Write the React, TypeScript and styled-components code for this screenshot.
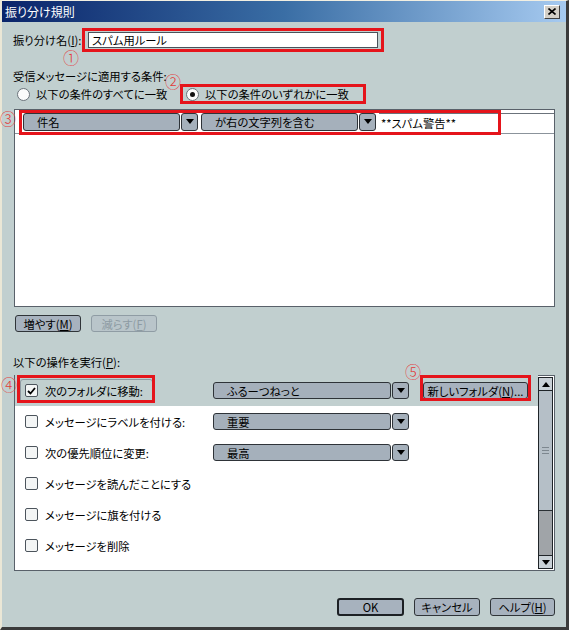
import React from 'react'
import styled, { createGlobalStyle } from 'styled-components'

const GlobalStyle = createGlobalStyle`
  html, body {
    margin: 0;
    padding: 0;
    background: #c1cfcf;
  }
  * {
    box-sizing: border-box;
  }
`

const Window = styled.div`
  width: 569px;
  height: 630px;
  display: flex;
  flex-direction: column;
  background: #c1cfcf;
  border-top: 1px solid #f2efe2;
  border-left: 2px solid #ebe7d6;
  border-right: 3px solid #3a3a3a;
  border-bottom: 3px solid #3a3a3a;
  font-family: "Noto Sans CJK JP", "Noto Sans", sans-serif;
  font-size: 11.3px;
  font-feature-settings: "palt";
  color: #000;
`

const TitleBar = styled.div`
  height: 21px;
  display: flex;
  align-items: center;
  justify-content: space-between;
  padding: 0 6px 0 3px;
  background: linear-gradient(to right, #0a246a 0%, #3a6ea5 50%, #a6caf0 100%);
  color: #fff;
  font-size: 12px;
  line-height: 21px;
`

const CloseButton = styled.div`
  width: 16px;
  height: 14px;
  display: flex;
  align-items: center;
  justify-content: center;
  background: #d4d0c8;
  border: 1px solid;
  border-color: #ffffff #404040 #404040 #ffffff;
`

const Body = styled.div`
  flex: 1;
  display: flex;
  flex-direction: column;
  padding: 0 11px 11px 11px;
`

const Label = styled.div<{ $mt: number }>`
  margin-top: ${p => p.$mt}px;
  line-height: 14px;
  white-space: nowrap;
`

const NameRow = styled.div`
  margin-top: 10px;
  display: flex;
  align-items: center;
  height: 16px;
`

const NameLabel = styled.span`
  width: 75px;
  flex-shrink: 0;
  line-height: 16px;
`

const NameField = styled.div`
  position: relative;
  width: 290px;
  height: 16px;
`

const TextBox = styled.div`
  height: 100%;
  border: 1px solid #4a525a;
  background: #fff;
  padding-left: 3px;
  line-height: 14px;
`

const RedFrame = styled.span<{ $t: number; $l: number; $r: number; $b: number }>`
  position: absolute;
  top: ${p => p.$t}px;
  left: ${p => p.$l}px;
  right: ${p => p.$r}px;
  bottom: ${p => p.$b}px;
  border: 3px solid #e5141b;
  pointer-events: none;
`

const Marker = styled.span<{ $x: number; $y: number }>`
  position: absolute;
  left: ${p => p.$x}px;
  top: ${p => p.$y}px;
  font-size: 16px;
  line-height: 16px;
  font-weight: 300;
  font-feature-settings: normal;
  color: #e23a3a;
  pointer-events: none;
`

const RadioRow = styled.div`
  margin-top: 1px;
  height: 20px;
  display: flex;
  align-items: center;
`

const RadioOption = styled.div<{ $w: number; $ml?: number }>`
  position: relative;
  height: 100%;
  width: ${p => p.$w}px;
  margin-left: ${p => p.$ml ?? 0}px;
  display: flex;
  align-items: center;
  gap: 6px;
  white-space: nowrap;
`

const Radio = styled.span<{ $on?: boolean }>`
  width: 13px;
  height: 13px;
  flex-shrink: 0;
  border-radius: 50%;
  background: #fafbfb;
  border: 1px solid #6b737b;
  display: flex;
  align-items: center;
  justify-content: center;

  &::after {
    content: '';
    display: ${p => (p.$on ? 'block' : 'none')};
    width: 5px;
    height: 5px;
    border-radius: 50%;
    background: #111;
  }
`

const ListBox = styled.div<{ $h: number; $mt: number }>`
  margin-top: ${p => p.$mt}px;
  margin-left: 1px;
  height: ${p => p.$h}px;
  border: 1px solid #59616a;
  background: #fff;
  display: flex;
`

const CondRow = styled.div`
  position: relative;
  flex: 1;
  align-self: flex-start;
  height: 24px;
  display: flex;
  align-items: center;
  gap: 3px;
  padding-left: 8px;
  border-bottom: 1px solid #8b939b;
`

const ConditionText = styled.div`
  flex: 1;
  align-self: flex-end;
  height: 20px;
  border-top: 1px solid #6b737b;
  padding-left: 2px;
  line-height: 18px;
  white-space: nowrap;
`

const SelectBox = styled.div<{ $w: number; $h: number }>`
  display: flex;
  gap: 1px;
  width: ${p => p.$w}px;
  height: ${p => p.$h}px;
  flex-shrink: 0;
`

const SelectField = styled.div`
  flex: 1;
  display: flex;
  align-items: center;
  padding-left: 13px;
  background: #a5b0bb;
  border: 1px solid #2e3338;
  border-radius: 3px;
  white-space: nowrap;
  overflow: hidden;
`

const SelectArrow = styled.div`
  width: 17px;
  display: flex;
  align-items: center;
  justify-content: center;
  background: #a5b0bb;
  border: 1px solid #2e3338;
  border-radius: 3px;

  &::after {
    content: '';
    border-left: 4px solid transparent;
    border-right: 4px solid transparent;
    border-top: 5px solid #000;
  }
`

const ButtonRow = styled.div`
  margin-top: 8px;
  padding-left: 2px;
  display: flex;
  gap: 10px;
`

const Button = styled.div<{ $w: number; $h?: number; $disabled?: boolean; $default?: boolean }>`
  position: relative;
  width: ${p => p.$w}px;
  height: ${p => p.$h ?? 17}px;
  display: flex;
  align-items: center;
  justify-content: center;
  background: ${p => (p.$disabled ? '#b9c5ca' : '#a7b2be')};
  color: ${p => (p.$disabled ? '#8d9ba3' : '#000')};
  border: ${p => (p.$default ? '2px solid #1c2024' : p.$disabled ? '1px solid #8f9ca4' : '1px solid #2f3438')};
  border-radius: 3px;
  white-space: nowrap;
  line-height: 14px;
`

const Rows = styled.div`
  flex: 1;
  margin-top: -1px;
  display: flex;
  flex-direction: column;
`

const ActionRow = styled.div<{ $active?: boolean }>`
  height: 31px;
  flex-shrink: 0;
  display: grid;
  grid-template-columns: 198px 196px auto;
  align-items: center;
  background: ${p => (p.$active ? '#c1cfcf' : 'transparent')};
`

const LabelCell = styled.div`
  padding-left: 5px;
  display: flex;
`

const LabelBox = styled.div<{ $focus?: boolean }>`
  position: relative;
  height: 24px;
  display: inline-flex;
  align-items: center;
  gap: 7px;
  padding: 0 9px 0 4px;
  border: 1px solid ${p => (p.$focus ? '#8e99a1' : 'transparent')};
  border-radius: 3px;
  white-space: nowrap;
`

const CheckBox = styled.span`
  width: 13px;
  height: 13px;
  flex-shrink: 0;
  display: flex;
  align-items: center;
  justify-content: center;
  background: #f3f5f5;
  border: 1px solid #4c545c;
  border-radius: 2px;
`

const FolderCell = styled.div`
  padding-left: 14px;
  display: flex;
`

const ScrollBar = styled.div`
  width: 15px;
  margin: 1px 1px 1px 0;
  display: flex;
  flex-direction: column;
  border: 1px solid #1f2428;
  background: #a0a4a8;
`

const ScrollButton = styled.div<{ $up?: boolean }>`
  height: 13px;
  display: flex;
  align-items: center;
  justify-content: center;
  background: #c9d1d7;
  border-bottom: ${p => (p.$up ? '1px solid #1f2428' : 'none')};
  border-top: ${p => (p.$up ? 'none' : '1px solid #1f2428')};

  &::after {
    content: '';
    border-left: 4px solid transparent;
    border-right: 4px solid transparent;
    ${p => (p.$up ? 'border-bottom: 5px solid #000;' : 'border-top: 5px solid #000;')}
  }
`

const Thumb = styled.div`
  height: 120px;
  display: flex;
  flex-direction: column;
  align-items: center;
  justify-content: center;
  gap: 2px;
  background: #b5bfc7;
  border-bottom: 1px solid #2a3034;

  span {
    width: 7px;
    height: 1px;
    background: #7d878f;
  }
`

const Track = styled.div`
  flex: 1;
`

const Footer = styled.div`
  margin-top: auto;
  display: flex;
  justify-content: flex-end;
  gap: 10px;
`

const Check = () => (
  <svg width="9" height="8" viewBox="0 0 9 8">
    <path d="M1 4 L3.5 6.5 L8 1" fill="none" stroke="#000" strokeWidth="1.8" />
  </svg>
)

const Select = ({ text, w, h }: { text: string; w: number; h: number }) => (
  <SelectBox $w={w} $h={h}>
    <SelectField>{text}</SelectField>
    <SelectArrow />
  </SelectBox>
)

const actions = [
  { label: 'メッセージにラベルを付ける:', select: '重要' },
  { label: '次の優先順位に変更:', select: '最高' },
  { label: 'メッセージを読んだことにする' },
  { label: 'メッセージに旗を付ける' },
  { label: 'メッセージを削除' },
]

export default function App() {
  return (
    <>
      <GlobalStyle />
      <Window>
        <TitleBar>
          <span>振り分け規則</span>
          <CloseButton>
            <svg width="8" height="7" viewBox="0 0 8 7">
              <path d="M0.5 0.5 L7.5 6.5 M7.5 0.5 L0.5 6.5" stroke="#000" strokeWidth="1.6" />
            </svg>
          </CloseButton>
        </TitleBar>

        <Body>
          <NameRow>
            <NameLabel>
              振り分け名(<u>I</u>):
            </NameLabel>
            <NameField>
              <TextBox>スパム用ルール</TextBox>
              <RedFrame $t={-4} $l={-6} $r={-6} $b={-4} />
              <Marker $x={-25} $y={17}>①</Marker>
            </NameField>
          </NameRow>

          <Label $mt={21}>受信メッセージに適用する条件:</Label>
          <RadioRow>
            <RadioOption $w={169} $ml={4}>
              <Radio />
              以下の条件のすべてに一致
            </RadioOption>
            <RadioOption $w={174}>
              <Radio $on />
              以下の条件のいずれかに一致
              <RedFrame $t={0} $l={-6} $r={-6} $b={0} />
              <Marker $x={-21} $y={-11}>②</Marker>
            </RadioOption>
          </RadioRow>

          <ListBox $h={198} $mt={5}>
            <CondRow>
              <Select text="件名" w={175} h={18} />
              <Select text="が右の文字列を含む" w={175} h={18} />
              <ConditionText>**スパム警告**</ConditionText>
              <RedFrame $t={0} $l={4} $r={53} $b={-2} />
              <Marker $x={-15} $y={0}>③</Marker>
            </CondRow>
          </ListBox>

          <ButtonRow>
            <Button $w={66}>
              増やす(<u>M</u>)
            </Button>
            <Button $w={66} $disabled>
              減らす(<u>F</u>)
            </Button>
          </ButtonRow>

          <Label $mt={23}>
            以下の操作を実行(<u>P</u>):
          </Label>

          <ListBox $h={196} $mt={6}>
            <Rows>
              <ActionRow $active>
                <LabelCell>
                  <LabelBox $focus>
                    <CheckBox>
                      <Check />
                    </CheckBox>
                    次のフォルダに移動:
                    <RedFrame $t={-5} $l={-4} $r={-3} $b={-1} />
                    <Marker $x={-20} $y={-4}>④</Marker>
                  </LabelBox>
                </LabelCell>
                <Select text="ふるーつねっと" w={196} h={17} />
                <FolderCell>
                  <Button $w={105}>
                    新しいフォルダ(<u>N</u>)...
                    <RedFrame $t={-8} $l={-4} $r={-4} $b={-3} />
                    <Marker $x={-19} $y={-20}>⑤</Marker>
                  </Button>
                </FolderCell>
              </ActionRow>
              {actions.map(a => (
                <ActionRow key={a.label}>
                  <LabelCell>
                    <LabelBox>
                      <CheckBox />
                      {a.label}
                    </LabelBox>
                  </LabelCell>
                  {a.select && <Select text={a.select} w={196} h={17} />}
                </ActionRow>
              ))}
            </Rows>
            <ScrollBar>
              <ScrollButton $up />
              <Thumb>
                <span />
                <span />
                <span />
              </Thumb>
              <Track />
              <ScrollButton />
            </ScrollBar>
          </ListBox>

          <Footer>
            <Button $w={67} $h={18} $default>
              OK
            </Button>
            <Button $w={66} $h={18}>
              キャンセル
            </Button>
            <Button $w={65} $h={18}>
              ヘルプ(<u>H</u>)
            </Button>
          </Footer>
        </Body>
      </Window>
    </>
  )
}
